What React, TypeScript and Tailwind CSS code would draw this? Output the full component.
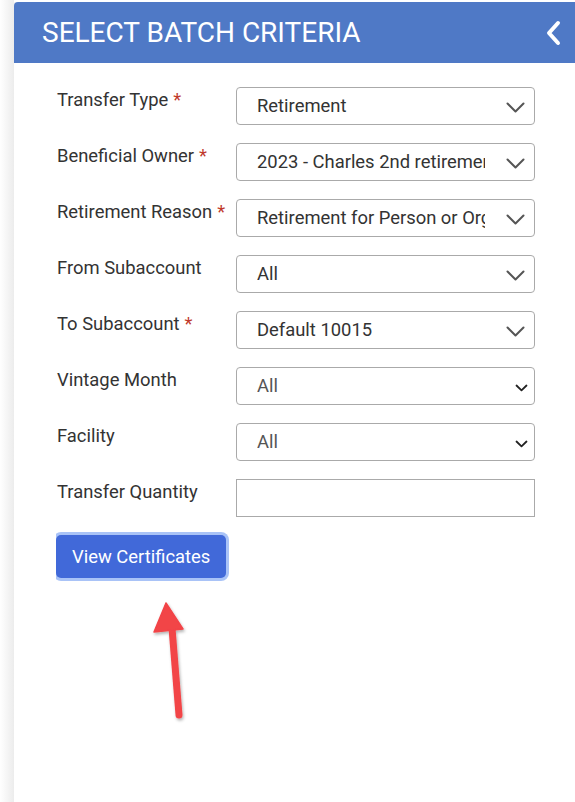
import React from "react";

type Row = { label: string; required?: boolean; value?: string; kind: "select" | "select2" | "input" };

const rows: Row[] = [
  { label: "Transfer Type", required: true, value: "Retirement", kind: "select" },
  { label: "Beneficial Owner", required: true, value: "2023 - Charles 2nd retirement", kind: "select" },
  { label: "Retirement Reason", required: true, value: "Retirement for Person or Organization", kind: "select" },
  { label: "From Subaccount", value: "All", kind: "select" },
  { label: "To Subaccount", required: true, value: "Default 10015", kind: "select" },
  { label: "Vintage Month", value: "All", kind: "select2" },
  { label: "Facility", value: "All", kind: "select2" },
  { label: "Transfer Quantity", kind: "input" },
];

function BigChevron() {
  return (
    <svg width="19" height="11" viewBox="0 0 19 11" className="absolute right-[9px] top-[14px]">
      <path d="M1.5 1.5 L9.5 9.5 L17.5 1.5" fill="none" stroke="#555" strokeWidth="2" strokeLinecap="round" strokeLinejoin="round" />
    </svg>
  );
}

function SmallChevron() {
  return (
    <svg width="13" height="8" viewBox="0 0 13 8" className="absolute right-[6px] top-[16px]">
      <path d="M1.5 1.5 L6.5 6.3 L11.5 1.5" fill="none" stroke="#222" strokeWidth="1.8" strokeLinecap="round" strokeLinejoin="round" />
    </svg>
  );
}

export default function App() {
  return (
    <div className="relative w-[575px] h-[802px] bg-white overflow-hidden" style={{ fontFamily: "Roboto, 'Liberation Sans', sans-serif" }}>
      <div className="absolute left-0 top-0 w-[14px] h-full bg-gradient-to-r from-white to-[#ececec]" />
      <div className="ml-[13px] mt-[2px] h-[800px] bg-white rounded-tl-[4px] border-l border-[#e2e2e2]">
        <div className="h-[61px] bg-[#4f79c6] rounded-tl-[4px] flex items-center justify-between pl-[28px] pr-[12px]">
          <span className="text-white text-[28px] leading-none">SELECT BATCH CRITERIA</span>
          <svg width="18" height="26" viewBox="0 0 18 26">
            <path d="M13 3 L4 13 L13 23" fill="none" stroke="#fff" strokeWidth="4" strokeLinecap="round" strokeLinejoin="round" />
          </svg>
        </div>
        <div className="pl-[43px] pt-[24px] flex flex-col gap-[18px]">
          {rows.map((r) => (
            <div key={r.label} className="flex">
              <div className="w-[179px] text-[18.4px] leading-[26px] text-[#333]">
                {r.label}
                {r.required && <span className="text-[#c0392b] ml-[5px]">*</span>}
              </div>
              {r.kind === "input" ? (
                <div className="w-[299px] h-[38px] border border-[#aaa] bg-white" />
              ) : (
                <div className="relative w-[299px] h-[38px] border border-[#aaa] rounded-[4px] bg-white">
                  <div
                    className={
                      r.kind === "select"
                        ? "absolute left-[20px] right-[49px] top-0 h-[36px] overflow-hidden whitespace-nowrap text-[18.4px] leading-[36px] text-[#333]"
                        : "absolute left-[20px] right-[49px] top-0 h-[36px] overflow-hidden whitespace-nowrap text-[18.4px] leading-[36px] text-[#555]"
                    }
                  >
                    {r.value}
                  </div>
                  {r.kind === "select" ? <BigChevron /> : <SmallChevron />}
                </div>
              )}
            </div>
          ))}
          <div className="-ml-[1px] -mt-[3px] w-fit overflow-hidden pt-[3px] pr-[3px] pb-[3px]">
            <button className="block h-[43px] px-[16px] rounded-[5px] bg-[#4169d9] text-white text-[18.4px] ring-[3px] ring-[#a9c3f7]">
              View Certificates
            </button>
          </div>
        </div>
      </div>
      <svg className="absolute left-0 top-0 pointer-events-none" width="575" height="802" viewBox="0 0 575 802">
        <defs>
          <filter id="sh" x="-50%" y="-50%" width="200%" height="200%">
            <feDropShadow dx="1" dy="2" stdDeviation="1.5" floodColor="#000" floodOpacity="0.3" />
          </filter>
        </defs>
        <g filter="url(#sh)">
          <path d="M172 628 L179 715" stroke="#f24447" strokeWidth="7" strokeLinecap="round" fill="none" />
          <path d="M166 603 L154 632 L183 629 Z" fill="#f24447" stroke="#f24447" strokeWidth="1.5" strokeLinejoin="round" />
        </g>
      </svg>
    </div>
  );
}
